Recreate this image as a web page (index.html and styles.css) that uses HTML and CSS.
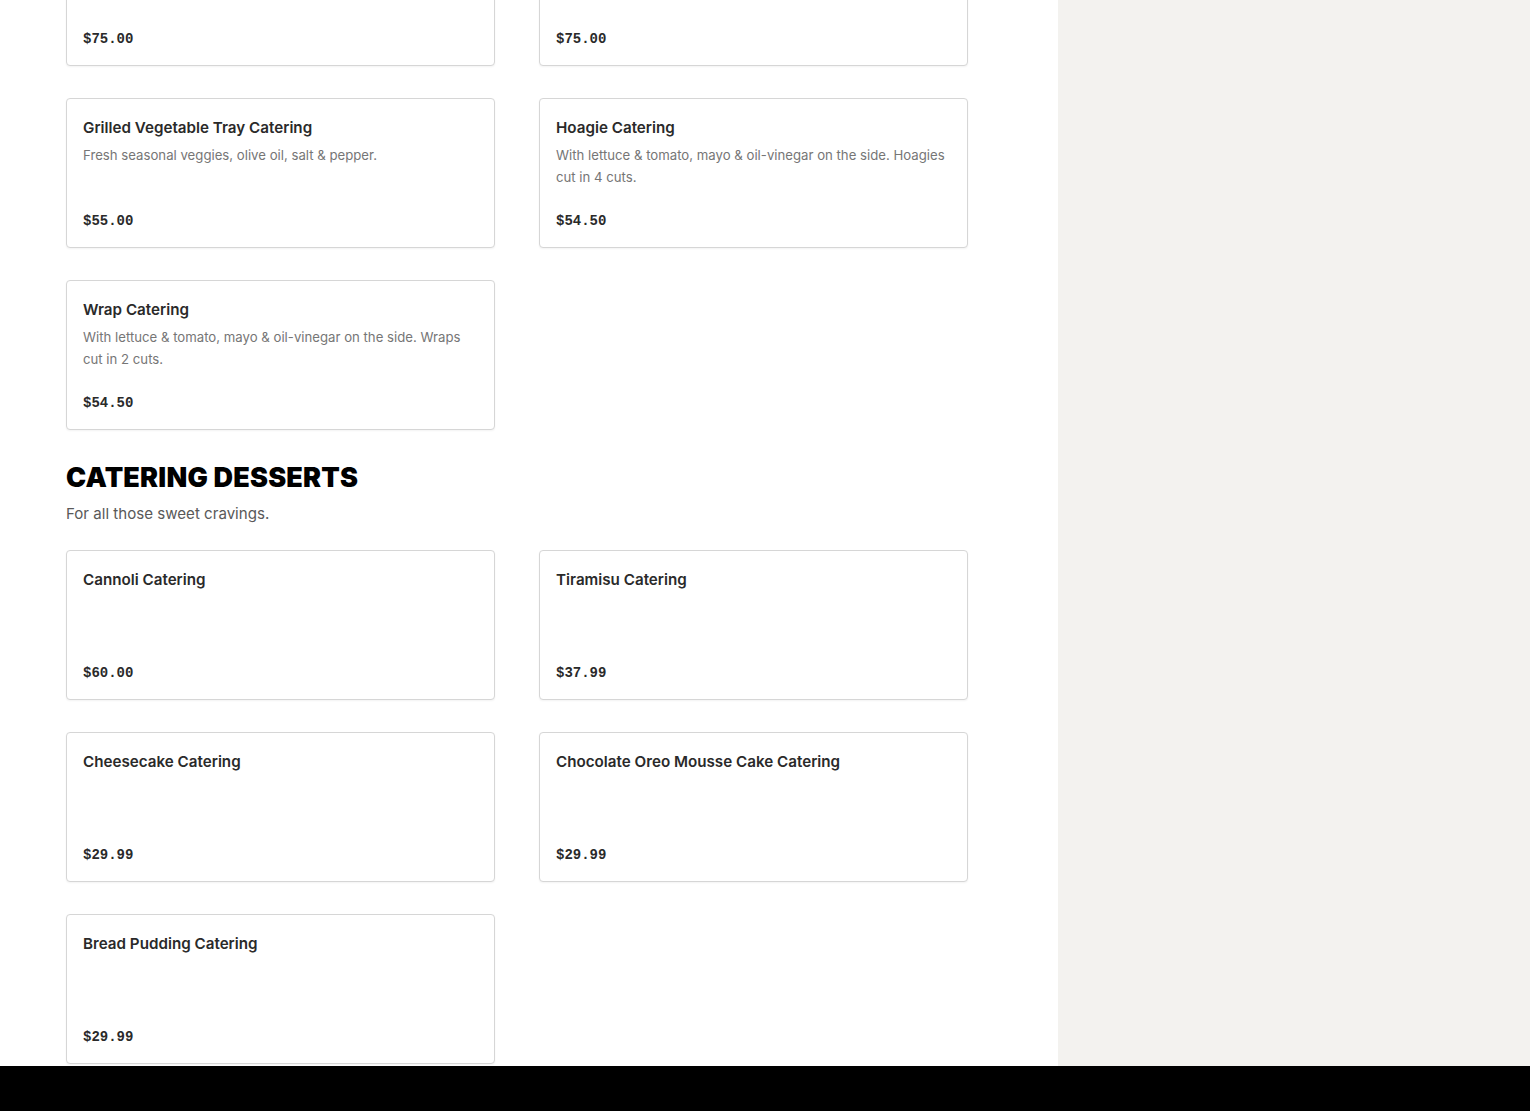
FILE: index.html
```html
<!DOCTYPE html>
<html lang="en">
<head>
    <meta charset="UTF-8">
    <meta name="viewport" content="width=device-width, initial-scale=1.0">
    <title>Catering Menu</title>
    <link rel="stylesheet" href="styles.css">
</head>
<body>
    <div class="page">
        <main class="menu">
            <section class="category category-scrolled">
                <div class="item-grid">
                    <div class="item-card">
                        <p class="item-desc"></p>
                        <span class="item-price">$75.00</span>
                    </div>
                    <div class="item-card">
                        <p class="item-desc"></p>
                        <span class="item-price">$75.00</span>
                    </div>
                    <div class="item-card">
                        <h3 class="item-name">Grilled Vegetable Tray Catering</h3>
                        <p class="item-desc">Fresh seasonal veggies, olive oil, salt &amp; pepper.</p>
                        <span class="item-price">$55.00</span>
                    </div>
                    <div class="item-card">
                        <h3 class="item-name">Hoagie Catering</h3>
                        <p class="item-desc">With lettuce &amp; tomato, mayo &amp; oil-vinegar on the side. Hoagies cut in 4 cuts.</p>
                        <span class="item-price">$54.50</span>
                    </div>
                    <div class="item-card">
                        <h3 class="item-name">Wrap Catering</h3>
                        <p class="item-desc">With lettuce &amp; tomato, mayo &amp; oil-vinegar on the side. Wraps cut in 2 cuts.</p>
                        <span class="item-price">$54.50</span>
                    </div>
                </div>
            </section>

            <section class="category">
                <h2 class="category-title">Catering Desserts</h2>
                <p class="category-subtitle">For all those sweet cravings.</p>
                <div class="item-grid">
                    <div class="item-card">
                        <h3 class="item-name">Cannoli Catering</h3>
                        <p class="item-desc"></p>
                        <span class="item-price">$60.00</span>
                    </div>
                    <div class="item-card">
                        <h3 class="item-name">Tiramisu Catering</h3>
                        <p class="item-desc"></p>
                        <span class="item-price">$37.99</span>
                    </div>
                    <div class="item-card">
                        <h3 class="item-name">Cheesecake Catering</h3>
                        <p class="item-desc"></p>
                        <span class="item-price">$29.99</span>
                    </div>
                    <div class="item-card">
                        <h3 class="item-name">Chocolate Oreo Mousse Cake Catering</h3>
                        <p class="item-desc"></p>
                        <span class="item-price">$29.99</span>
                    </div>
                    <div class="item-card">
                        <h3 class="item-name">Bread Pudding Catering</h3>
                        <p class="item-desc"></p>
                        <span class="item-price">$29.99</span>
                    </div>
                </div>
            </section>
        </main>
        <aside class="sidebar"></aside>
    </div>
    <footer class="footer"></footer>
</body>
</html>
```

FILE: styles.css
```css
* {
    margin: 0;
    padding: 0;
    box-sizing: border-box;
}

html, body {
    height: 100%;
    overflow: hidden;
}

body {
    font-family: Inter, 'Noto Sans', Arial, sans-serif;
    background: #fff;
    color: #2a2a2a;
    display: flex;
    flex-direction: column;
}

.page {
    display: flex;
    flex: 1;
    min-height: 0;
}

.menu {
    width: 1058px;
    padding: 0 90px 2px 66px;
    overflow: hidden;
    display: flex;
    flex-direction: column;
    justify-content: flex-end;
}

.sidebar {
    flex: 1;
    background: #f3f2ef;
}

.category {
    margin-top: 30px;
}

.category-scrolled {
    margin-top: 0;
}

.category-title {
    font-family: Inter, 'Liberation Sans', Arial, sans-serif;
    font-weight: 900;
    font-size: 27px;
    line-height: 36px;
    text-transform: uppercase;
    letter-spacing: 0.2px;
    color: #000;
}

.category-subtitle {
    font-size: 15.1px;
    line-height: 24px;
    color: #595959;
    margin-top: 6px;
    margin-bottom: 24px;
}

.item-grid {
    display: grid;
    grid-template-columns: 429px 429px;
    column-gap: 44px;
    row-gap: 32px;
}

.item-card {
    height: 150px;
    border: 1px solid #d6d6d6;
    border-radius: 4px;
    box-shadow: 0 1px 2px rgba(0, 0, 0, 0.05);
    padding: 19px 16px 17px 16px;
    display: flex;
    flex-direction: column;
    background: #fff;
}

.item-name {
    font-size: 15.2px;
    font-weight: 600;
    line-height: 20px;
    color: #2a2a2a;
}

.item-desc {
    font-size: 13.2px;
    line-height: 22px;
    color: #767676;
    margin-top: 6px;
    flex: 1;
}

.item-price {
    font-family: 'Liberation Mono', 'DejaVu Sans Mono', monospace;
    font-weight: 700;
    font-size: 14px;
    line-height: 18px;
    color: #2a2a2a;
}

.footer {
    height: 45px;
    background: #000;
    flex-shrink: 0;
}
```
